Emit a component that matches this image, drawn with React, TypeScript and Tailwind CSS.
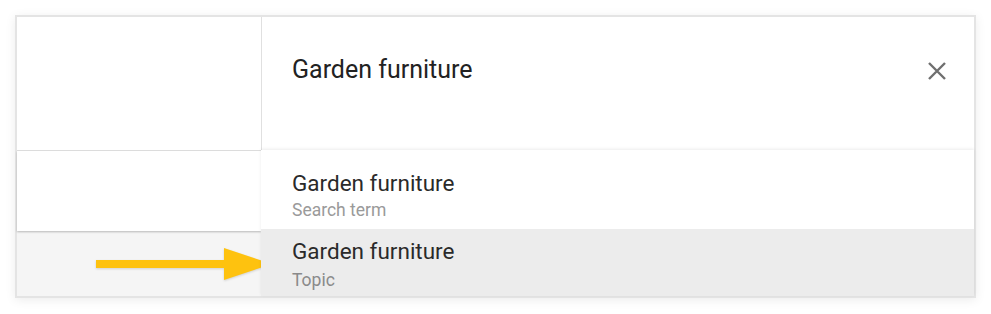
import React from 'react';

const font = { fontFamily: 'Roboto, "Liberation Sans", sans-serif' };

const CloseIcon = () => (
    <svg width="20" height="20" viewBox="0 0 20 20" className="text-[#6f6f6f]">
        <path d="M2 2 L18 18 M18 2 L2 18" stroke="currentColor" strokeWidth="2.4" fill="none" />
    </svg>
);

const Arrow = () => (
    <svg width="180" height="36" viewBox="0 0 180 36" className="absolute left-[95px] top-[246px] drop-shadow-[0_1px_1px_rgba(0,0,0,0.15)]">
        <path d="M1 14 H129 V2 L177 18 L129 34 V22 H1 Z" fill="#fec20f" />
    </svg>
);

export default function App() {
    return (
        <div className="relative w-[991px] h-[314px] bg-white" style={font}>
            <div className="absolute left-[15px] top-[15px] w-[961px] h-[283px] border-2 border-[#e4e4e4] shadow-[0_2px_10px_rgba(0,0,0,0.08)] flex bg-white">
                {/* left column */}
                <div className="w-[245px] flex flex-col border-r border-[#e0e0e0]">
                    <div className="h-[134px] border-b border-[#e0e0e0]"></div>
                    <div className="h-[80px] shadow-[0_1px_2px_rgba(0,0,0,0.25)] relative z-10"></div>
                    <div className="flex-1 bg-[#f5f5f5]"></div>
                </div>

                {/* right column */}
                <div className="flex-1 flex flex-col">
                    <div className="h-[133px] flex items-start justify-between pl-[30px] pr-[27px] pt-[38px]">
                        <span className="text-[25px] leading-[30px] text-[#222222]">Garden furniture</span>
                        <span className="pt-[6px]"><CloseIcon /></span>
                    </div>
                    <div className="flex-1 flex flex-col shadow-[0_-1px_3px_rgba(0,0,0,0.08)] relative z-20 bg-white -ml-px">
                        <div className="h-[79px] pl-[31px] pt-[19px] flex flex-col">
                            <span className="text-[22.5px] leading-[29px] text-[#2a2a2a]">Garden furniture</span>
                            <span className="text-[17.5px] leading-[24px] text-[#9a9a9a]">Search term</span>
                        </div>
                        <div className="flex-1 bg-[#ececec] pl-[31px] pt-[8px] flex flex-col">
                            <span className="text-[22.5px] leading-[29px] text-[#2a2a2a]">Garden furniture</span>
                            <span className="text-[17.5px] leading-[24px] mt-[2px] text-[#8a8a8a]">Topic</span>
                        </div>
                    </div>
                </div>
            </div>
            <Arrow />
        </div>
    );
}
